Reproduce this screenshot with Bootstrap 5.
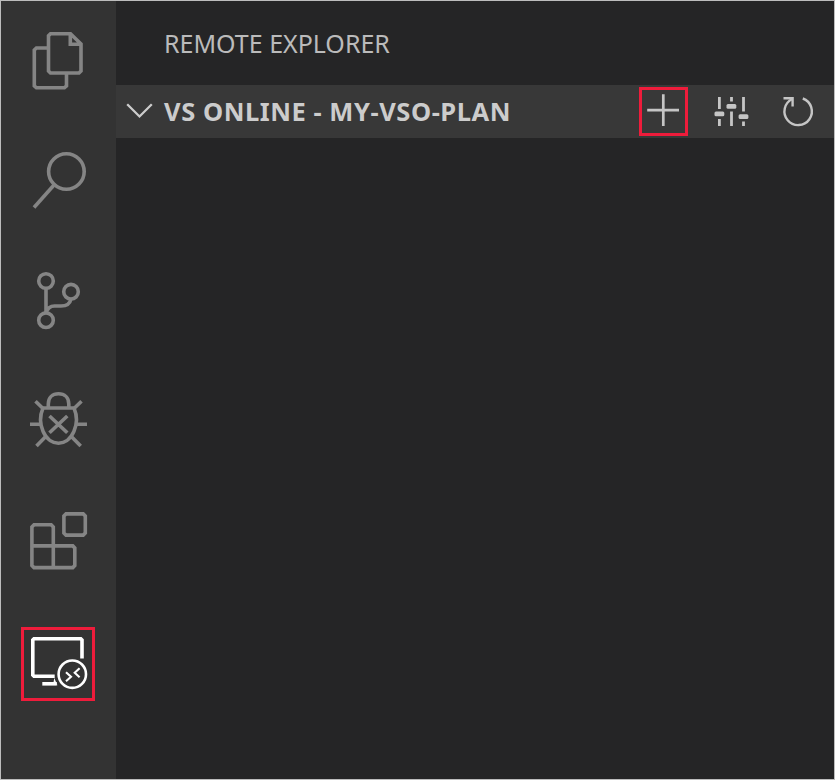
<!DOCTYPE html>
<html lang="en">
<head>
<meta charset="utf-8">
<meta name="viewport" content="width=device-width, initial-scale=1">
<title>Remote Explorer</title>
<link href="https://cdn.jsdelivr.net/npm/bootstrap@5.3.0/dist/css/bootstrap.min.css" rel="stylesheet">
<style>
  body { background: #252526; font-family: "Noto Sans", "Open Sans", sans-serif; color: #bbb; }
  .window { border: 1px solid #bdbdbd; background: #252526; }
  .activity { width: 115px; background: #333; }
  .activity svg, .panel svg { display: block; fill: none; }
  .activity .item { height: 120px; color: #858585; stroke-width: 3.6; }
  .activity .item.current { color: #fff; padding: 26px 0 0 20px; }
  .marked { border: 3px solid #ee1c3b; }
  .panel-title { height: 84px; padding-left: 48px; font-size: 25px; line-height: 1; }
  .panel-title span { letter-spacing: -.01px; }
  .section { height: 53px; background: #383838; color: #ccc; }
  .section h2 { font-size: 25.5px; line-height: 1; font-weight: 700; letter-spacing: .55px; padding-left: 10px; }
  .btn-tool { color: #c5c5c5; }
</style>
<script src="https://cdn.jsdelivr.net/npm/bootstrap@5.3.0/dist/js/bootstrap.bundle.min.js"></script>
</head>
<body>
<div class="window d-flex vh-100 overflow-hidden">
  <nav class="activity d-flex flex-column flex-shrink-0" aria-label="Activity bar">
    <a class="item" aria-label="Explorer">
      <svg width="115" height="120" viewBox="1 1 115 120" stroke="currentColor">
        <path d="M48.5 48H36.4L34.3 50V85.9L36.4 87.8H64.4L66.5 85.9V73"/>
        <path d="M50.5 33.8H70.5L81 44V71L79 73H50.5L48.5 71V35.8ZM70.3 33.8V44.3H81"/>
      </svg>
    </a>
    <a class="item" aria-label="Search">
      <svg width="115" height="120" viewBox="1 121 115 120" stroke="currentColor">
        <circle cx="66.4" cy="171.5" r="17.8"/><path d="M54 185L34 207.5"/>
      </svg>
    </a>
    <a class="item" aria-label="Source control">
      <svg width="115" height="120" viewBox="1 241 115 120" stroke="currentColor">
        <circle cx="46" cy="281" r="7.3"/><circle cx="71" cy="291.7" r="7.3"/><circle cx="46" cy="320.2" r="7.3"/>
        <path d="M46 288V313M46 313C47.5 308 50.5 306 54.5 306H61C67 306 70 304 71 299"/>
      </svg>
    </a>
    <a class="item" aria-label="Debug">
      <svg width="115" height="120" viewBox="1 361 115 120" stroke="currentColor">
        <path d="M43 408H74A17.8 23.6 0 1 1 43 408Z"/>
        <path d="M48.3 408V404C48.3 397.5 52.5 393.8 58.5 393.8S68.8 397.5 68.8 404V408"/>
        <path d="M35.5 401.2L42.5 408M81.5 401.2L74.5 408M30 424.3H40.5M76.5 424.3H87M36.5 446L45.3 437M80.7 446L71.8 437M49.5 416L67.3 432.8M67.3 416L49.5 432.8"/>
      </svg>
    </a>
    <a class="item" aria-label="Extensions">
      <svg width="115" height="120" viewBox="1 481 115 120" stroke="currentColor">
        <path d="M66 513.9H83.2L85.3 516V533L83.2 535.1H66L63.9 533V516Z"/>
        <path d="M34 524.8H51.2L53.3 526.9V567.6H34L31.9 565.5V526.9ZM31.9 545.9H72.8L74.8 548V565.5L72.8 567.6H53"/>
      </svg>
    </a>
    <a class="item current d-flex align-items-start" aria-label="Remote Explorer">
      <div class="marked">
        <svg width="68" height="68" viewBox="24 630 68 68" stroke="currentColor">
          <path d="M54.7 676.2H34L32.8 675V640L34 638.8H80.8L82 640V658.4"/>
          <path d="M42.3 683.8H56.8"/>
          <path d="M53.5 682.2L54.3 678L57.5 685.5Z" fill="currentColor" stroke="none"/>
          <circle cx="72.3" cy="674.2" r="13.7" stroke-width="2.6"/>
          <path d="M66 672.2L71 676.8L66 681.2M79.6 668.3L74.7 672.8L79.6 677.2" stroke-width="2.1"/>
        </svg>
      </div>
    </a>
  </nav>
  <main class="panel flex-grow-1">
    <header class="panel-title d-flex align-items-center"><span>REMOTE EXPLORER</span></header>
    <div class="section d-flex align-items-center">
      <svg class="flex-shrink-0" width="38" height="53" viewBox="116 85 38 53" stroke="#ccc" stroke-width="2.3"><path d="M127.2 104.3L139.5 116.5L151.8 104.3"/></svg>
      <h2 class="mb-0 text-nowrap flex-grow-1">VS ONLINE - MY-VSO-PLAN</h2>
      <button class="btn btn-tool marked rounded-0 p-0 flex-shrink-0" aria-label="Add">
        <svg width="43" height="43" viewBox="642 90 43 43" stroke="currentColor" stroke-width="2.7"><path d="M663.3 94.2V126M647.2 110.2H679"/></svg>
      </button>
      <button class="btn btn-tool border-0 rounded-0 p-0 flex-shrink-0" aria-label="Configure">
        <svg width="85" height="53" viewBox="688 85 85 53" stroke="currentColor" stroke-width="2.8">
          <path d="M719.4 97V109M719.4 119V126M731.5 97V101.4M731.5 111.5V126M743.5 97V111.6M743.5 121.4V126"/>
          <g fill="currentColor" stroke="none"><rect x="714.5" y="111.5" width="9.8" height="4.8" rx="1.5"/><rect x="726.5" y="104" width="9.8" height="4.8" rx="1.5"/><rect x="738.6" y="114.2" width="9.8" height="4.8" rx="1.5"/></g>
        </svg>
      </button>
      <button class="btn btn-tool border-0 rounded-0 p-0 flex-shrink-0" aria-label="Refresh">
        <svg width="61" height="53" viewBox="773 85 61 53" stroke="currentColor" stroke-width="2.4">
          <path d="M802.8 98.5A13.7 13.7 0 1 1 792.3 99"/><path d="M783.5 98.2H792.6V106.5"/>
        </svg>
      </button>
    </div>
  </main>
</div>
</body>
</html>
